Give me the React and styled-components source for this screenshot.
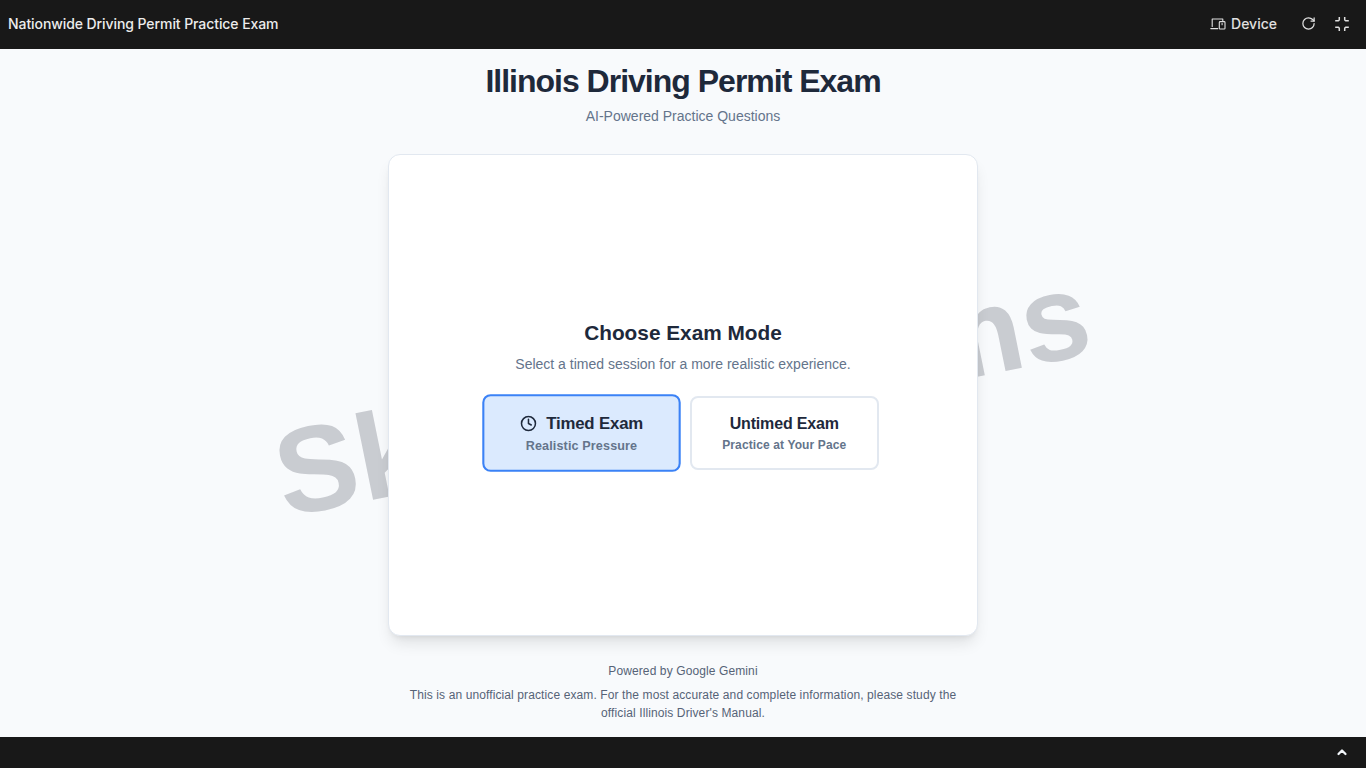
import React from "react";
import styled, { createGlobalStyle } from "styled-components";

const Global = createGlobalStyle`
  html, body { margin: 0; padding: 0; height: 100%; }
  body { background: #f8fafc; font-family: "Liberation Sans", Arial, sans-serif; }
`;
const Page = styled.div`
  height: 768px; display: flex; flex-direction: column; overflow: hidden; position: relative;
`;
const TopBar = styled.header`
  height: 49px; flex: none; background: #181818; display: flex; align-items: center;
  justify-content: space-between; padding: 0 16px 2px 8px; box-sizing: border-box;
  font-family: Inter, sans-serif; color: #e0e0e0; font-size: 14px; position: relative; z-index: 2;
`;
const BarTitle = styled.div`font-weight: 500; color: #ececec; letter-spacing: -0.08px;`;
const BarActions = styled.div`display: flex; align-items: center; gap: 18px;`;
const DeviceButton = styled.div`display: flex; align-items: center; gap: 5px; font-weight: 500; margin-right: 6px;`;
const Icon = styled.svg`display: block; flex: none; fill: none; stroke: currentColor; stroke-linecap: round; stroke-linejoin: round;`;
const Main = styled.main`
  flex: 1; display: flex; flex-direction: column; align-items: center; position: relative; min-height: 0;
`;
const Watermark = styled.div`
  position: absolute; left: 50%; top: 345px; margin-left: -1px; white-space: nowrap;
  transform: translate(-50%, -50%) rotate(-11.5deg);
  font-size: 122px; font-weight: 700; color: rgba(110, 115, 125, 0.34);
  z-index: 0;
`;
const Heading = styled.h1`
  position: relative; z-index: 1; margin: 14px 0 0; font-size: 32px; line-height: 36px; font-weight: 700; color: #1e293b; letter-spacing: -1px;
`;
const Tagline = styled.p`
  position: relative; z-index: 1; margin: 7px 0 0; font-size: 14px; line-height: 20px; color: #64748b;
`;
const Card = styled.section`
  position: relative; z-index: 1; width: 590px; height: 482px; box-sizing: border-box; margin-top: 28px; padding-bottom: 2px;
  background: #fff; border: 1px solid #e2e8f0; border-radius: 12px;
  box-shadow: 0 10px 15px -3px rgba(0,0,0,.1), 0 4px 6px -4px rgba(0,0,0,.1);
  display: flex; flex-direction: column; align-items: center; justify-content: center;
`;
const CardTitle = styled.h2`margin: 0; font-size: 20.8px; line-height: 28px; font-weight: 700; color: #1e293b;`;
const CardText = styled.p`margin: 7px 0 0; font-size: 14px; line-height: 20px; color: #64748b;`;
const Modes = styled.div`display: flex; align-items: center; gap: 13.5px; margin-top: 22px;`;
const ModeButton = styled.div`
  box-sizing: border-box; display: flex; flex-direction: column; align-items: center; justify-content: center;
  width: 189px; height: 74px;
  border-radius: 8px; border: 2px solid ${p => p.$active ? "#3b82f6" : "#e2e8f0"};
  background: ${p => p.$active ? "#dbeafe" : "#fff"};
  transform: ${p => p.$active ? "scale(1.05)" : "none"};
`;
const ModeName = styled.div`
  display: flex; align-items: center; gap: 9px; font-size: 16px; line-height: 24px; font-weight: 700; color: #1e293b; letter-spacing: -0.17px;
`;
const ModeHint = styled.div`
  font-size: 12px; line-height: 18px; font-weight: 700; color: #64748b; letter-spacing: 0.12px;
`;
const Foot = styled.div`
  position: relative; z-index: 1; margin-top: 26px; width: 560px; text-align: center; font-size: 12px; line-height: 18px; color: #566377; letter-spacing: 0.11px;
`;
const FootNote = styled.p`margin: 6px 0 0;`;
const BottomBar = styled.footer`
  height: 31px; flex: none; background: #181818; display: flex; align-items: center; justify-content: flex-end;
  padding: 0 18px 2px 0; box-sizing: border-box; color: #f1f5f9; position: relative; z-index: 2;
`;

export default function App() {
  return (
    <Page>
      <Global />
      <TopBar>
        <BarTitle>Nationwide Driving Permit Practice Exam</BarTitle>
        <BarActions>
          <DeviceButton>
            <Icon width="16" height="16" viewBox="0 0 16 16" strokeWidth="1.1">
              <path d="M2.2 10.5V3h10.6v1.8" />
              <path d="M.8 12.6h7" />
              <rect x="9.3" y="5.6" width="5.7" height="7.4" rx=".8" />
              <path d="M12.1 7.5v1.2" />
            </Icon>
            Device
          </DeviceButton>
          <Icon width="15" height="15" viewBox="0 0 24 24" strokeWidth="2">
            <path d="M21 12a9 9 0 1 1-9-9c2.5 0 4.9 1 6.7 2.7L21 8" />
            <path d="M21 3v5h-5" />
          </Icon>
          <Icon width="16" height="16" viewBox="0 0 16 16" strokeWidth="1.5">
            <path d="M5.3 1v2.5a1.5 1.5 0 0 1-1 1.3H1.2" strokeLinecap="butt" />
            <path d="M10.7 1v2.5a1.5 1.5 0 0 0 1 1.3h3.1" strokeLinecap="butt" />
            <path d="M1.2 11.2h3.1a1.5 1.5 0 0 1 1 1.3V15" strokeLinecap="butt" />
            <path d="M14.8 11.2h-3.1a1.5 1.5 0 0 0-1 1.3V15" strokeLinecap="butt" />
          </Icon>
        </BarActions>
      </TopBar>
      <Main>
        <Watermark>Skillful Exams</Watermark>
        <Heading>Illinois Driving Permit Exam</Heading>
        <Tagline>AI-Powered Practice Questions</Tagline>
        <Card>
          <CardTitle>Choose Exam Mode</CardTitle>
          <CardText>Select a timed session for a more realistic experience.</CardText>
          <Modes>
            <ModeButton $active>
              <ModeName>
                <Icon width="16" height="16" viewBox="0 0 24 24" strokeWidth="2.2">
                  <circle cx="12" cy="12" r="10" />
                  <path d="M12 6v6l4 2" />
                </Icon>
                Timed Exam
              </ModeName>
              <ModeHint>Realistic Pressure</ModeHint>
            </ModeButton>
            <ModeButton>
              <ModeName>Untimed Exam</ModeName>
              <ModeHint>Practice at Your Pace</ModeHint>
            </ModeButton>
          </Modes>
        </Card>
        <Foot>
          Powered by Google Gemini
          <FootNote>This is an unofficial practice exam. For the most accurate and complete information, please study the official Illinois Driver's Manual.</FootNote>
        </Foot>
      </Main>
      <BottomBar>
        <Icon width="12" height="12" viewBox="0 0 24 24" strokeWidth="4.5">
          <path d="m5 16 7-7 7 7" />
        </Icon>
      </BottomBar>
    </Page>
  );
}
